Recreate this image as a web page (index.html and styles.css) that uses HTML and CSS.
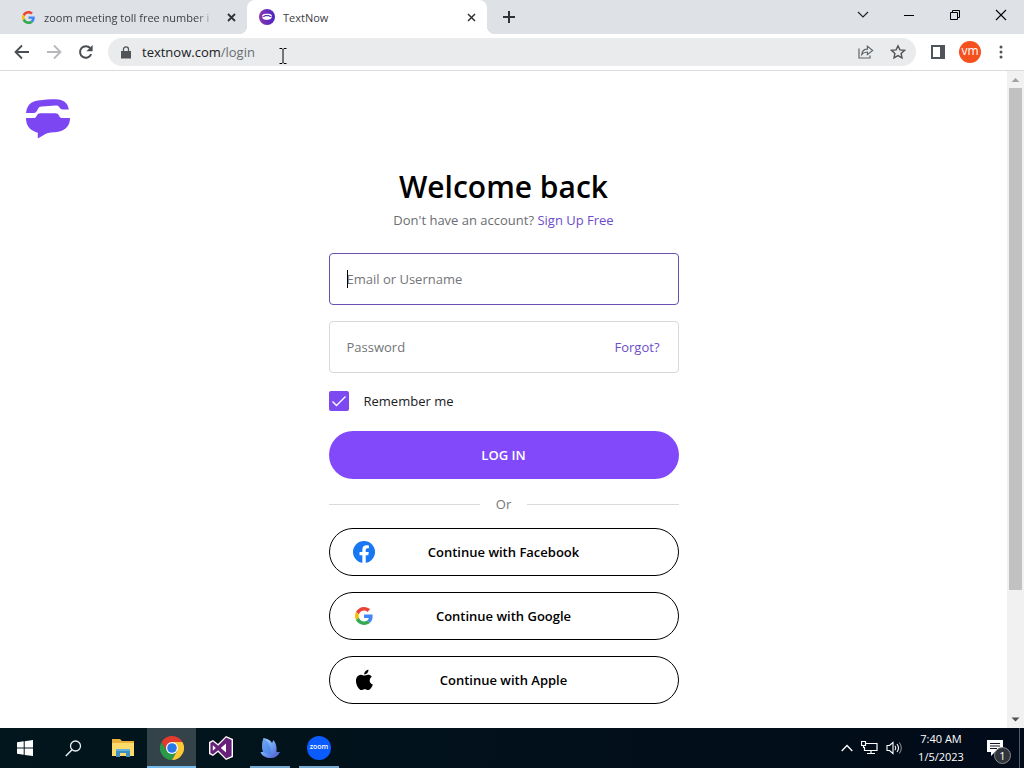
FILE: index.html
```html
<!DOCTYPE html>
<html lang="en">
<head>
<meta charset="utf-8">
<title>TextNow</title>
<link rel="stylesheet" href="styles.css">
</head>
<body>
<svg class="defs" aria-hidden="true">
  <symbol id="google" viewBox="0 0 48 48">
    <path fill="#ea4335" d="M24 9.500c3.500 0 6.700 1.200 9.200 3.600l6.900-6.900C35.900 2.400 30.500 0 24 0 14.600 0 6.500 5.400 2.600 13.200l8 6.200C12.400 13.700 17.700 9.500 24 9.500z"/>
    <path fill="#4285f4" d="M47 24.600c0-1.600-.2-3.100-.4-4.600H24v9h12.900c-.6 3-2.200 5.500-4.700 7.200l7.700 6C44.400 38 47 32 47 24.600z"/>
    <path fill="#fbbc05" d="M10.500 28.600c-.5-1.500-.8-3-.8-4.600s.3-3.100.8-4.600l-8-6.200C.9 16.500 0 20.100 0 24s.9 7.500 2.600 10.800z"/>
    <path fill="#34a853" d="M24 48c6.500 0 11.900-2.100 15.900-5.800l-7.700-6c-2.200 1.500-4.900 2.300-8.200 2.300-6.300 0-11.600-4.200-13.500-9.900l-8 6.200C6.500 42.600 14.600 48 24 48z"/>
  </symbol>
</svg>
<div class="desktop">
  <header class="browser">
    <div class="tabs">
      <div class="tab">
        <svg class="favicon"><use href="#google"/></svg>
        <span class="tab-title fade">zoom meeting toll free number i</span>
        <button class="tab-close" aria-label="Close tab"><svg width="9" height="9" viewBox="0 0 9 9"><path d="M1 1l7 7M8 1L1 8" stroke="#303236" stroke-width="1.800"/></svg></button>
      </div>
      <div class="tab active">
        <svg class="favicon big" viewBox="0 0 16 16"><defs><linearGradient id="tn" x1="0" x2="1"><stop stop-color="#8c35b0"/><stop offset="1" stop-color="#4826c0"/></linearGradient></defs><circle cx="8" cy="8" r="8" fill="url(#tn)"/><path d="M3 7.400C3 5.300 5 4.800 8 4.800s5 .5 5 2.600l-2-.6-1-.7H6l-1 .7zM3.200 7.800L5.500 8 6 7.300h4l.5.700 2.300-.2c0 2-1.800 2.900-4.300 2.900l-1.500.4v-.4C4.700 10.700 3.200 9.800 3.200 7.800z" fill="#fff"/></svg>
        <span class="tab-title">TextNow</span>
        <button class="tab-close" aria-label="Close tab"><svg width="9" height="9" viewBox="0 0 9 9"><path d="M1 1l7 7M8 1L1 8" stroke="#303236" stroke-width="1.500"/></svg></button>
      </div>
      <button class="new-tab" aria-label="New tab"><svg width="12" height="12" viewBox="0 0 12 12"><path d="M6 0v12M0 6h12" stroke="#303236" stroke-width="2"/></svg></button>
      <div class="window-controls">
        <button aria-label="Search tabs"><svg width="12" height="12" viewBox="0 0 12 12"><path d="M1 3l5 5 5-5" fill="none" stroke="#222" stroke-width="1.200"/></svg></button>
        <button aria-label="Minimize"><svg width="12" height="12" viewBox="0 0 12 12"><path d="M1 6.500h10" stroke="#000"/></svg></button>
        <button aria-label="Restore"><svg width="12" height="12" viewBox="0 0 12 12"><path d="M1.500 3.500h7v7h-7zM3.500 3.500v-2h7v7h-2" fill="none" stroke="#000"/></svg></button>
        <button aria-label="Close"><svg width="12" height="12" viewBox="0 0 12 12"><path d="M1 1l10 10M11 1L1 11" stroke="#000" stroke-width="1.100"/></svg></button>
      </div>
    </div>
    <div class="toolbar">
      <button aria-label="Back"><svg width="16" height="16" viewBox="0 0 16 16"><path d="M15 8H2M8 1.500L1.500 8 8 14.500" fill="none" stroke="#4a4d51" stroke-width="1.800"/></svg></button>
      <button aria-label="Forward"><svg width="16" height="16" viewBox="0 0 16 16"><path d="M1 8h13M8 1.500L14.500 8 8 14.500" fill="none" stroke="#b6b8bb" stroke-width="1.800"/></svg></button>
      <button aria-label="Reload"><svg width="16" height="16" viewBox="0 0 16 16"><path d="M13.200 10.200A5.800 5.800 0 1 1 12.300 4.200" fill="none" stroke="#4a4d51" stroke-width="2"/><path d="M14.600 1v6.200H8.400z" fill="#4a4d51"/></svg></button>
      <div class="address">
        <svg width="10" height="13" viewBox="0 0 10 13"><path d="M0 5h10v7.500H0z" fill="#505357"/><path d="M2.500 5V3.300a2.500 2.500 0 0 1 5 0V5" fill="none" stroke="#505357" stroke-width="1.300"/></svg>
        <span class="url">textnow.com<span class="path">/login</span></span>
        <svg class="ibeam" width="8" height="16" viewBox="0 0 8 16"><path d="M.5.500h2.500l1 1 1-1h2.500M4 1.500v13M.5 15.500h2.500l1-1 1 1h2.500" fill="none" stroke="#000"/></svg>
        <button class="share" aria-label="Share"><svg width="16" height="16" viewBox="0 0 16 16"><path d="M1 4.500v9.500h11v-2.500M3.800 10.500c.3-3.500 2.300-5.300 5.600-5.300V2.300L14.600 6.400 9.400 10.600V8c-2.600 0-4.200.7-5.600 2.500z" fill="none" stroke="#5f6368" stroke-width="1.200"/></svg></button>
        <button aria-label="Bookmark"><svg width="16" height="16" viewBox="0 0 16 16"><path d="M8 1.800l1.900 4.100 4.500.5-3.300 3 .9 4.500L8 11.600 4 13.900l.9-4.500-3.300-3 4.500-.5z" fill="none" stroke="#505357" stroke-width="1.400"/></svg></button>
      </div>
      <button class="panel" aria-label="Side panel"><svg width="14" height="14" viewBox="0 0 14 14"><path d="M1 1h12v12H1z" fill="none" stroke="#505357" stroke-width="2"/><path d="M9 1h4v12H9z" fill="#505357"/></svg></button>
      <button class="profile">vm</button>
      <button aria-label="Menu"><svg width="4" height="14" viewBox="0 0 4 14" fill="#505357"><circle cx="2" cy="2" r="1.500"/><circle cx="2" cy="7" r="1.500"/><circle cx="2" cy="12" r="1.500"/></svg></button>
    </div>
  </header>
  <div class="viewport">
    <main class="page">
      <a class="logo" href="#" aria-label="TextNow"><svg width="46" height="40" viewBox="0 0 46 40" fill="#7c47f2"><path d="M1 14C2 6 6 2.400 13 1.600 21 .6 28 0 33 .4c6 .5 10 4 10.800 10.100h-5.600c-2 0-3-.7-3.800-2.200-.9-1.600-1.800-2-3.700-1.900l-14 1c-2 .1-2.800.7-3.700 2.400C11.900 12.300 11 14 8.700 14z"/><path d="M1 19h7.300c1.800 0 2.600-.5 3.300-2 .8-1.900 1.700-2.700 3.700-2.700h15c2 0 2.900.7 3.700 2.400.8 1.800 1.700 2.300 3.500 2.300H45C45 28 39 32.600 30 33.200c-5 .3-7 .3-9.500 1.800L12.800 39.500V33.700C5 31.500 1 27 1 19z"/></svg></a>
      <form class="login">
        <h1>Welcome back</h1>
        <p class="signup">Don't have an account? <a href="#">Sign Up Free</a></p>
        <div class="field focused"><span class="caret"></span><input type="text" aria-label="Email or Username" placeholder="Email or Username"></div>
        <div class="field"><input type="password" aria-label="Password" placeholder="Password"><a href="#">Forgot?</a></div>
        <label class="remember"><span class="check"><input type="checkbox" checked><svg width="20" height="20" viewBox="0 0 20 20"><path d="M3.500 10.500l4 4L16.500 5.500" fill="none" stroke="#fff" stroke-width="1.400"/></svg></span>Remember me</label>
        <button class="submit" type="button">LOG IN</button>
        <div class="or">Or</div>
        <div class="providers">
          <button type="button"><svg viewBox="0 0 24 24"><circle cx="12" cy="12" r="12" fill="#1877f2"/><path d="M16.700 15.500l.5-3.500h-3.300V9.800c0-1 .5-1.900 2-1.900h1.500v-3s-1.400-.2-2.700-.2c-2.700 0-4.500 1.600-4.500 4.600V12H7.100v3.500h3.100V24h3.700v-8.500z" fill="#fff"/></svg>Continue with Facebook</button>
          <button type="button"><svg class="google"><use href="#google"/></svg>Continue with Google</button>
          <button type="button"><svg viewBox="0 0 24 24"><path d="M18.300 12.700c0-2.200 1.800-3.300 1.900-3.400-1-1.500-2.600-1.700-3.200-1.700-1.400-.1-2.700.8-3.400.8s-1.800-.8-2.900-.8c-1.500 0-2.900.9-3.700 2.200-1.600 2.700-.4 6.800 1.100 9 .8 1.100 1.700 2.300 2.900 2.300s1.600-.7 3-.7 1.800.7 3 .7 2-1.100 2.800-2.200c.9-1.300 1.200-2.500 1.300-2.600-.1 0-2.800-1-2.800-3.600zM16.300 6.100c.6-.8 1-1.800.9-2.900-.9 0-2 .6-2.700 1.400-.6.700-1.100 1.700-1 2.700 1.100.1 2.100-.5 2.800-1.200z" transform="translate(-4.500 -3.200) scale(1.240)"/></svg>Continue with Apple</button>
        </div>
      </form>
    </main>
    <div class="scrollbar" aria-hidden="true">
      <svg width="17" height="17" viewBox="0 0 17 17"><path d="M4.500 11L8.500 7l4 4z" fill="#a3a3a3"/></svg>
      <div class="track"><div class="thumb"></div></div>
      <svg width="17" height="17" viewBox="0 0 17 17"><path d="M4.500 6.500l4 4 4-4z" fill="#505050"/></svg>
    </div>
  </div>
  <footer class="taskbar">
    <button aria-label="Start"><svg width="16" height="16" viewBox="0 0 16 16"><path d="M0 2.300L6.700 1.300v6.300H0zM7.700 1.200L16 0v7.600H7.700zM0 8.500h6.700v6.300L0 13.800zM7.700 8.500H16V16l-8.300-1.100z" fill="#fff"/></svg></button>
    <button aria-label="Search"><svg width="17" height="17" viewBox="0 0 17 17"><circle cx="10.500" cy="6" r="5" fill="none" stroke="#e8eef0" stroke-width="1.300"/><path d="M7 9.800L.8 16" stroke="#e8eef0" stroke-width="1.500"/></svg></button>
    <button aria-label="File Explorer"><svg width="22" height="18" viewBox="0 0 22 18"><path d="M0 0h8l2 2h12v14H0z" fill="#e8b23c"/><path d="M0 4h22v13H0z" fill="#fbdc6b"/><path d="M4 10h14v8h-4v-4H8v4H4z" fill="#3f8fc4"/><path d="M4 10h14v2H4z" fill="#62b3dc"/></svg></button>
    <button class="current" aria-label="Chrome"><svg width="24" height="24" viewBox="0 0 24 24"><path d="M12 24A12 12 0 0 1 1.600 6l5.200 9L12 18l5.200-3z" fill="#2a9a49"/><path d="M12 6h10.400A12 12 0 0 0 1.600 6l5.200 9z" fill="#e33b2e"/><path d="M12 6h10.400A12 12 0 0 1 12 24l5.200-9z" fill="#fcc934"/><circle cx="12" cy="12" r="6" fill="#fff"/><circle cx="12" cy="12" r="4.800" fill="#2878e8"/></svg></button>
    <button aria-label="Visual Studio"><svg width="26" height="26" viewBox="0 0 26 26"><path d="M18 1l7 3v18l-7 3-8-8-5 4-4-2V7l4-2 5 4z" fill="#fff"/><path d="M18.200 2.600l5.400 2.300v16.200l-5.400 2.300-8-8.200-5.300 4.200-2.500-1.300V7.900l2.500-1.300 5.300 4.200zM18 8.500L12.800 13l5.200 4.500zM4.800 10.200v5.600l3-2.800z" fill="#68217a" fill-rule="evenodd"/></svg></button>
    <button class="open" aria-label="Bird app"><svg width="20" height="22" viewBox="0 0 20 22"><defs><linearGradient id="wing" x2="1" y2="1"><stop stop-color="#b9dcff"/><stop offset=".5" stop-color="#6d9ff2"/><stop offset="1" stop-color="#4a50c8"/></linearGradient></defs><path d="M3.500 1C9 2 11 4 12 6l1.500-3C16 6 17 10 16.500 15L20 15c-2 4-5 6-9 6-5 0-9-2-10.500-6L3 15C1.500 10 2 5 3.500 1z" fill="url(#wing)"/><path d="M3.500 1C9 5 11 11 11.500 18 7 17 3 15 3 15 1.500 10 2 5 3.500 1z" fill="#3f80e4" opacity=".55"/></svg></button>
    <button class="open" aria-label="Zoom"><span class="zoom">zoom</span></button>
    <div class="tray">
      <svg width="12" height="8" viewBox="0 0 12 8"><path d="M.7 7L6 1.500 11.300 7" fill="none" stroke="#fff" stroke-width="1.300"/></svg>
      <svg width="17" height="14" viewBox="0 0 17 14"><path d="M5 2.500h11v7H3.500V6M10 9.500v3M6 12.500h8M.5.500h4v4h-4zM2.500 4.500V7" fill="none" stroke="#fff" stroke-width="1.200"/></svg>
      <svg width="17" height="14" viewBox="0 0 17 14"><path d="M1 4.500h2.500L7 1.500v11L3.500 9.500H1z M9 4.800q1.600 2.200 0 4.400M11 3q3 4 0 8" fill="none" stroke="#fff" stroke-width="1.100"/><path d="M13.300 1.500q4 5.500 0 11" fill="none" stroke="#7d858d" stroke-width="1.100"/></svg>
      <div class="clock"><time>7:40 AM</time><time>1/5/2023</time></div>
      <button class="notice" aria-label="Notifications"><svg width="16" height="16" viewBox="0 0 16 16"><path d="M0 0h16v12H8l-4 4v-4H0z" fill="#fff"/><path d="M3 3.500h10M3 6h10M3 8.500h7" stroke="#101722"/></svg><span class="badge">1</span></button>
      <span class="peek"></span>
    </div>
  </footer>
</div>
</body>
</html>
```
FILE: styles.css
```css
* { box-sizing: border-box; }
body { margin: 0; font-family: "Open Sans", "Noto Sans", sans-serif; color: #202124; background: #fff; }
button, input { font: inherit; color: inherit; margin: 0; }
button { border: 0; background: none; padding: 0; display: flex; align-items: center; justify-content: center; }
a { color: #6c4dcc; text-decoration: none; }
svg { flex: none; display: block; }
.defs { display: none; }
.desktop { min-height: 100vh; display: flex; flex-direction: column; }

.tabs { display: flex; height: 34px; background: #dee1e6; padding-left: 7px; }
.tab { position: relative; display: flex; align-items: center; flex: 0 1 240px; min-width: 0; padding: 0 9px 0 12px; font-size: 11px; color: #3c4043; }
.tab:first-child { padding-left: 15px; }
.tab.active { background: #fff; border-radius: 8px 8px 0 0; }
.tab.active::before, .tab.active::after { content: ""; position: absolute; bottom: 0; width: 8px; height: 8px; }
.tab.active::before { right: 100%; background: radial-gradient(circle at 0 0, transparent 8px, #fff 8px); }
.tab.active::after { left: 100%; background: radial-gradient(circle at 100% 0, transparent 8px, #fff 8px); }
.favicon { width: 13px; height: 13px; margin-right: 9px; }
.favicon.big { width: 16px; height: 16px; margin-right: 8px; }
.tab-title { flex: 1; min-width: 0; overflow: hidden; white-space: nowrap; }
.tab-title.fade { mask-image: linear-gradient(to right, #000 88%, transparent); }
.tab-close { width: 14px; height: 16px; margin-left: 8px; }
.new-tab { width: 28px; margin-left: 8px; }
.window-controls { display: flex; margin-left: auto; padding-bottom: 5px; }
.window-controls button { width: 46px; }

.toolbar { display: flex; align-items: center; height: 37px; padding: 0 8px 0 6px; background: #fff; border-bottom: 1px solid #d9dbde; }
.toolbar > button { width: 32px; height: 32px; }
.address { flex: 1; display: flex; align-items: center; height: 28px; margin-left: 6px; padding: 0 10px 0 13px; border-radius: 14px; background: #e9ebec; font-size: 13px; }
.url { margin-left: 11px; }
.path { color: #6b6e72; }
.ibeam { margin: 8px 0 0 24px; }
.share { margin-left: auto; }
.address button + button { margin-left: 16px; }
.toolbar .panel { margin-left: 6px; }
.toolbar .profile { width: 22px; height: 22px; margin: 0 5px; border-radius: 50%; background: #f4511e; color: #fff; font-size: 12px; line-height: 12px; padding-bottom: 2px; }
.toolbar .profile + button { width: 30px; }

.viewport { flex: 1; display: flex; }
.page { flex: 1; min-width: 0; display: flex; flex-direction: column; padding: 28px 25px 24px; }
.logo { align-self: flex-start; }
.login { width: 100%; max-width: 350px; margin: 24px auto 0; font-size: 14px; line-height: 20px; }
h1 { margin: 0; text-align: center; font-size: 30px; line-height: 47px; font-weight: 600; color: #000; }
.signup { margin: 0 0 23px; text-align: center; font-size: 13px; color: #6b6e72; }
.field { position: relative; display: flex; align-items: center; height: 52px; margin-bottom: 16px; padding: 0 18px 0 17px; border: 1px solid #d8d8dc; border-radius: 4px; font-size: 13px; }
.field.focused { border-color: #6a4fb0; }
.field input { flex: 1; min-width: 0; height: 100%; padding: 0; border: 0; outline: 0; background: none; }
.field input::placeholder { color: #737578; opacity: 1; }
.caret { position: absolute; left: 17px; width: 1px; height: 18px; background: #000; }
.remember { display: flex; align-items: center; gap: 15px; margin: 18px 0 20px; font-size: 13px; }
.check { display: grid; }
.check > * { grid-area: 1 / 1; }
.check input { appearance: none; width: 20px; height: 20px; border-radius: 2px; background: #7c4af0; }
.submit { width: 100%; height: 48px; border-radius: 24px; background: #8249fb; color: #fff; font-size: 13px; font-weight: 600; }
.or { display: flex; align-items: center; gap: 16px; margin: 15px 0 14px; color: #737578; font-size: 13px; }
.or::before, .or::after { content: ""; flex: 1; height: 1px; background: #dadade; }
.providers { display: grid; gap: 16px; }
.providers button { display: grid; grid-template-columns: 22px 1fr 22px; height: 48px; padding: 0 23px; border: 1px solid #000; border-radius: 24px; color: #000; font-size: 13px; font-weight: 600; }
.providers svg { width: 22px; height: 22px; }
.providers .google { width: 18px; height: 18px; margin: 0 2px; }

.scrollbar { width: 17px; display: flex; flex-direction: column; background: #f1f1f1; }
.track { flex: 1; padding: 0 2px; }
.thumb { height: 80.5%; background: #c1c1c1; }

.taskbar { display: flex; height: 40px; background: linear-gradient(to right, #02161d, #020b19); color: #fff; }
.taskbar > button { width: 49px; border-bottom: 2px solid transparent; border-top: 2px solid transparent; }
.taskbar .current { background: #34424a; border-color: #34424a #34424a #76b9ed; }
.taskbar > .open { width: 40px; margin: 0 4px 0 5px; border-bottom-color: #76a9cf; }
.zoom { width: 24px; height: 24px; border-radius: 50%; background: #0b5cff; font-size: 7px; line-height: 22px; font-weight: 600; }
.tray { display: flex; align-items: center; gap: 8px; margin-left: auto; font-size: 12px; line-height: 18px; }
.clock { display: flex; flex-direction: column; align-items: center; width: 60px; font-size: 11px; }
.notice { position: relative; width: 32px; height: 40px; }
.badge { position: absolute; right: 0; bottom: 4px; width: 17px; height: 17px; border: 1px solid #888; border-radius: 50%; background: #30343b; font-size: 11px; line-height: 15px; text-align: center; }
.peek { align-self: stretch; width: 5px; border-left: 1px solid #525a63; }
```
